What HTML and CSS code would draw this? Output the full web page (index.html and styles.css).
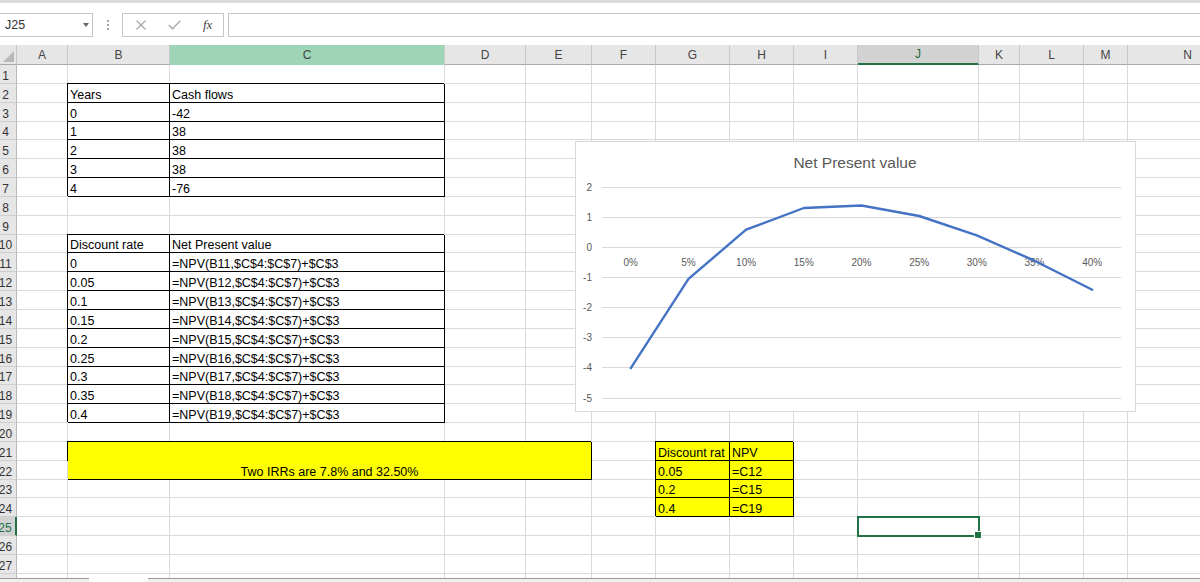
FILE: index.html
```html
<!DOCTYPE html>
<html lang="en">
<head>
<meta charset="utf-8">
<title>NPV sheet</title>
<link rel="stylesheet" href="styles.css">
</head>
<body>
<div class="topband"></div>
<div class="fbar">
  <div class="namebox"><span>J25</span><span class="nb-arrow"></span></div>
  <div class="vdots"><i></i><i></i><i></i></div>
  <div class="fbtns">
    <svg class="ic-x" width="12" height="10" viewBox="0 0 12 10"><path d="M1.5 0.5 L10.5 9.5 M10.5 0.5 L1.5 9.5" stroke="#a6a6a6" stroke-width="1.2" fill="none"/></svg>
    <svg class="ic-ok" width="13" height="10" viewBox="0 0 13 10"><path d="M0.8 5 L4.5 8.8 L12.3 0.8" stroke="#a6a6a6" stroke-width="1.3" fill="none"/></svg>
    <span class="fx">fx</span>
  </div>
  <div class="finput"></div>
</div>
<div class="sheetwrap">
<div class="sheet">
<div class="corner"></div><div class="ch">A</div><div class="ch">B</div><div class="ch csel">C</div><div class="ch">D</div><div class="ch">E</div><div class="ch">F</div><div class="ch">G</div><div class="ch">H</div><div class="ch">I</div><div class="ch jsel">J</div><div class="ch">K</div><div class="ch">L</div><div class="ch">M</div><div class="ch">N</div>
<div class="rh">1</div><i></i><i></i><i></i><i></i><i></i><i></i><i></i><i></i><i></i><i></i><i></i><i></i><i></i><i></i>
<div class="rh">2</div><i></i><div class="bt">Years</div><div class="bt">Cash flows</div><i></i><i></i><i></i><i></i><i></i><i></i><i></i><i></i><i></i><i></i><i></i>
<div class="rh">3</div><i></i><div class="bt">0</div><div class="bt">-42</div><i></i><i></i><i></i><i></i><i></i><i></i><i></i><i></i><i></i><i></i><i></i>
<div class="rh">4</div><i></i><div class="bt">1</div><div class="bt">38</div><i></i><i></i><i></i><i></i><i></i><i></i><i></i><i></i><i></i><i></i><i></i>
<div class="rh">5</div><i></i><div class="bt">2</div><div class="bt">38</div><i></i><i></i><i></i><i></i><i></i><i></i><i></i><i></i><i></i><i></i><i></i>
<div class="rh">6</div><i></i><div class="bt">3</div><div class="bt">38</div><i></i><i></i><i></i><i></i><i></i><i></i><i></i><i></i><i></i><i></i><i></i>
<div class="rh">7</div><i></i><div class="bt">4</div><div class="bt">-76</div><i></i><i></i><i></i><i></i><i></i><i></i><i></i><i></i><i></i><i></i><i></i>
<div class="rh">8</div><i></i><i></i><i></i><i></i><i></i><i></i><i></i><i></i><i></i><i></i><i></i><i></i><i></i><i></i>
<div class="rh">9</div><i></i><i></i><i></i><i></i><i></i><i></i><i></i><i></i><i></i><i></i><i></i><i></i><i></i><i></i>
<div class="rh">10</div><i></i><div class="bt">Discount rate</div><div class="bt">Net Present value</div><i></i><i></i><i></i><i></i><i></i><i></i><i></i><i></i><i></i><i></i><i></i>
<div class="rh">11</div><i></i><div class="bt">0</div><div class="bt">=NPV(B11,$C$4:$C$7)+$C$3</div><i></i><i></i><i></i><i></i><i></i><i></i><i></i><i></i><i></i><i></i><i></i>
<div class="rh">12</div><i></i><div class="bt">0.05</div><div class="bt">=NPV(B12,$C$4:$C$7)+$C$3</div><i></i><i></i><i></i><i></i><i></i><i></i><i></i><i></i><i></i><i></i><i></i>
<div class="rh">13</div><i></i><div class="bt">0.1</div><div class="bt">=NPV(B13,$C$4:$C$7)+$C$3</div><i></i><i></i><i></i><i></i><i></i><i></i><i></i><i></i><i></i><i></i><i></i>
<div class="rh">14</div><i></i><div class="bt">0.15</div><div class="bt">=NPV(B14,$C$4:$C$7)+$C$3</div><i></i><i></i><i></i><i></i><i></i><i></i><i></i><i></i><i></i><i></i><i></i>
<div class="rh">15</div><i></i><div class="bt">0.2</div><div class="bt">=NPV(B15,$C$4:$C$7)+$C$3</div><i></i><i></i><i></i><i></i><i></i><i></i><i></i><i></i><i></i><i></i><i></i>
<div class="rh">16</div><i></i><div class="bt">0.25</div><div class="bt">=NPV(B16,$C$4:$C$7)+$C$3</div><i></i><i></i><i></i><i></i><i></i><i></i><i></i><i></i><i></i><i></i><i></i>
<div class="rh">17</div><i></i><div class="bt">0.3</div><div class="bt">=NPV(B17,$C$4:$C$7)+$C$3</div><i></i><i></i><i></i><i></i><i></i><i></i><i></i><i></i><i></i><i></i><i></i>
<div class="rh">18</div><i></i><div class="bt">0.35</div><div class="bt">=NPV(B18,$C$4:$C$7)+$C$3</div><i></i><i></i><i></i><i></i><i></i><i></i><i></i><i></i><i></i><i></i><i></i>
<div class="rh">19</div><i></i><div class="bt">0.4</div><div class="bt">=NPV(B19,$C$4:$C$7)+$C$3</div><i></i><i></i><i></i><i></i><i></i><i></i><i></i><i></i><i></i><i></i><i></i>
<div class="rh">20</div><i></i><i></i><i></i><i></i><i></i><i></i><i></i><i></i><i></i><i></i><i></i><i></i><i></i><i></i>
<div class="rh">21</div><i></i><div class="bt yc merged">Two IRRs are 7.8% and 32.50%</div><i></i><div class="bt yc clip"><span class="clip-in">Discount rate</span></div><div class="bt yc">NPV</div><i></i><i></i><i></i><i></i><i></i><i></i>
<div class="rh">22</div><i></i><i></i><div class="bt yc">0.05</div><div class="bt yc">=C12</div><i></i><i></i><i></i><i></i><i></i><i></i>
<div class="rh">23</div><i></i><i></i><i></i><i></i><i></i><i></i><div class="bt yc">0.2</div><div class="bt yc">=C15</div><i></i><i></i><i></i><i></i><i></i><i></i>
<div class="rh">24</div><i></i><i></i><i></i><i></i><i></i><i></i><div class="bt yc">0.4</div><div class="bt yc">=C19</div><i></i><i></i><i></i><i></i><i></i><i></i>
<div class="rh rsel">25</div><i></i><i></i><i></i><i></i><i></i><i></i><i></i><i></i><i></i><div class="sel"></div><i></i><i></i><i></i><i></i>
<div class="rh">26</div><i></i><i></i><i></i><i></i><i></i><i></i><i></i><i></i><i></i><i></i><i></i><i></i><i></i><i></i>
<div class="rh">27</div><i></i><i></i><i></i><i></i><i></i><i></i><i></i><i></i><i></i><i></i><i></i><i></i><i></i><i></i>
<div class="rh">28</div><i></i><i></i><i></i><i></i><i></i><i></i><i></i><i></i><i></i><i></i><i></i><i></i><i></i><i></i>
</div>
<div class="chart">
<svg width="561" height="271" viewBox="0 0 561 271">
<rect x="0.5" y="0.5" width="560" height="270" fill="#fff" stroke="#d9d9d9"/>
<text class="ctitle" x="280" y="27" text-anchor="middle">Net Present value</text>
<g stroke="#d9d9d9" stroke-width="1">
<line x1="27" x2="546" y1="46.5" y2="46.5"/>
<line x1="27" x2="546" y1="76.5" y2="76.5"/>
<line x1="27" x2="546" y1="106.5" y2="106.5"/>
<line x1="27" x2="546" y1="136.5" y2="136.5"/>
<line x1="27" x2="546" y1="166.5" y2="166.5"/>
<line x1="27" x2="546" y1="196.5" y2="196.5"/>
<line x1="27" x2="546" y1="226.5" y2="226.5"/>
<line x1="27" x2="546" y1="257.5" y2="257.5"/>
</g>
<g class="axl" text-anchor="end">
<text x="17" y="50">2</text>
<text x="17" y="80">1</text>
<text x="17" y="110">0</text>
<text x="17" y="140">-1</text>
<text x="17" y="170">-2</text>
<text x="17" y="200">-3</text>
<text x="17" y="230">-4</text>
<text x="17" y="261">-5</text>
</g>
<g class="axl" text-anchor="middle">
<text x="55.8" y="125">0%</text>
<text x="113.5" y="125">5%</text>
<text x="171.1" y="125">10%</text>
<text x="228.8" y="125">15%</text>
<text x="286.5" y="125">20%</text>
<text x="344.2" y="125">25%</text>
<text x="401.8" y="125">30%</text>
<text x="459.5" y="125">35%</text>
<text x="517.2" y="125">40%</text>
</g>
<polyline points="55.8,227.1 113.5,137.9 171.1,88.7 228.8,67 286.5,64.5 344.2,75 401.8,94.4 459.5,119.7 517.2,148.8" fill="none" stroke="#4472c4" stroke-width="2.4" stroke-linejoin="round" stroke-linecap="round"/>
</svg>
</div>
</div>
<div class="tabbar"><div class="tab-l"></div><div class="tab-a"></div><div class="tab-r"></div></div>
</body>
</html>
```
FILE: styles.css
```css
* { box-sizing: border-box; margin: 0; padding: 0; }
html, body { width: 1200px; height: 582px; overflow: hidden; background: #fff; }
body {
  font-family: "Liberation Sans", Arial, sans-serif;
  display: flex;
  flex-direction: column;
  color: #000;
}
.topband { height: 3px; background: #dcdcdc; flex: none; }
.fbar {
  height: 42px;
  flex: none;
  display: flex;
  align-items: flex-start;
  padding-top: 10px;
}
.namebox {
  width: 94px;
  height: 24px;
  margin-left: -1px;
  border: 1px solid #c6c6c6;
  display: flex;
  align-items: center;
  justify-content: space-between;
  padding: 0 3px 0 5px;
  font-size: 12.5px;
  color: #333;
}
.nb-arrow {
  width: 0; height: 0;
  border-left: 3.5px solid transparent;
  border-right: 3.5px solid transparent;
  border-top: 4px solid #666;
}
.vdots {
  margin-left: 14px;
  height: 24px;
  display: flex;
  flex-direction: column;
  justify-content: center;
  gap: 2px;
}
.vdots i { display: block; width: 2px; height: 2px; background: #a6a6a6; }
.fbtns {
  margin-left: 13px;
  width: 102px;
  height: 24px;
  border: 1px solid #c6c6c6;
  display: flex;
  align-items: center;
}
.ic-x { margin-left: 12px; }
.ic-ok { margin-left: 21px; }
.fx {
  margin-left: 22px;
  font-family: "Liberation Serif", serif;
  font-style: italic;
  font-size: 13px;
  color: #444;
}
.finput {
  margin-left: 4px;
  flex: 1;
  height: 24px;
  border: 1px solid #c6c6c6;
  margin-right: -2px;
}
.sheetwrap {
  flex: 1;
  position: relative;
  overflow: hidden;
}
.sheet {
  display: grid;
  grid-template-columns: 17px 51px 102px 275px 81px 66px 64px 74px 64px 64px 121px 41px 64px 44px 120px;
  grid-template-rows: 20px;
  grid-auto-rows: 18.85px;
  width: 1248px;
}
.sheet > * {
  display: flex;
  align-items: flex-end;
  border-right: 1px solid #dadada;
  border-bottom: 1px solid #dadada;
  padding: 0 2px;
  font-size: 12.5px;
  line-height: 13px;
  white-space: nowrap;
  min-width: 0;
}
.sheet > .corner {
  background: #e6e6e6;
  border-right-color: #c8c8c8;
  border-bottom-color: #a9a9a9;
  position: relative;
}
.corner::after {
  content: "";
  position: absolute;
  right: 2px;
  bottom: 2px;
  width: 0; height: 0;
  border-left: 11px solid transparent;
  border-bottom: 11px solid #b8b8b8;
}
.sheet > .ch {
  background: #e6e6e6;
  border-right-color: #c8c8c8;
  border-bottom-color: #a9a9a9;
  justify-content: center;
  align-items: center;
  color: #444;
  font-size: 12px;
  line-height: 14px;
}
.sheet > .csel { background: #9fd5b7; border-bottom-color: #9fd5b7; }
.sheet > .jsel {
  background: #d2d2d2;
  border-bottom: 2px solid #217346;
  color: #1e6b41;
}
.sheet > .rh {
  background: #e6e6e6;
  border-right-color: #b8b8b8;
  border-bottom-color: #cfcfcf;
  justify-content: center;
  padding: 0 5px 0 0;
  color: #333;
  font-size: 12px;
  overflow: visible;
}
.sheet > .rsel {
  background: #d2d2d2;
  color: #217346;
  border-right: 2px solid #217346;
}
.sheet > .bt {
  border-right-color: #000;
  border-bottom-color: #000;
  box-shadow: -1px -1px 0 #000;
}
.sheet > .yc { background: #ffff00; }
.sheet > .merged {
  grid-column: span 4;
  grid-row: span 2;
  justify-content: center;
}
.sheet > .clip { padding-right: 4px; }
.clip-in { display: block; overflow: hidden; width: 100%; }
.sheet > .sel {
  position: relative;
  outline: 2px solid #217346;
  outline-offset: -1px;
}
.sel::after {
  content: "";
  position: absolute;
  right: -4px;
  bottom: -4px;
  width: 6px;
  height: 6px;
  background: #217346;
  border: 1px solid #fff;
}
.chart {
  position: absolute;
  left: 575px;
  top: 96px;
  width: 561px;
  height: 271px;
}
.chart svg { display: block; }
.ctitle {
  font-family: "Liberation Sans", Arial, sans-serif;
  font-size: 15.5px;
  fill: #595959;
}
.axl {
  font-family: "Liberation Sans", Arial, sans-serif;
  font-size: 10px;
  fill: #595959;
}
.tabbar {
  height: 4px;
  flex: none;
  display: flex;
  background: #f0f0f0;
}
.tab-l { width: 89px; border-top: 1px solid #9a9a9a; }
.tab-a { width: 59px; background: #fff; }
.tab-r { flex: 1; border-top: 1px solid #9a9a9a; }
```
